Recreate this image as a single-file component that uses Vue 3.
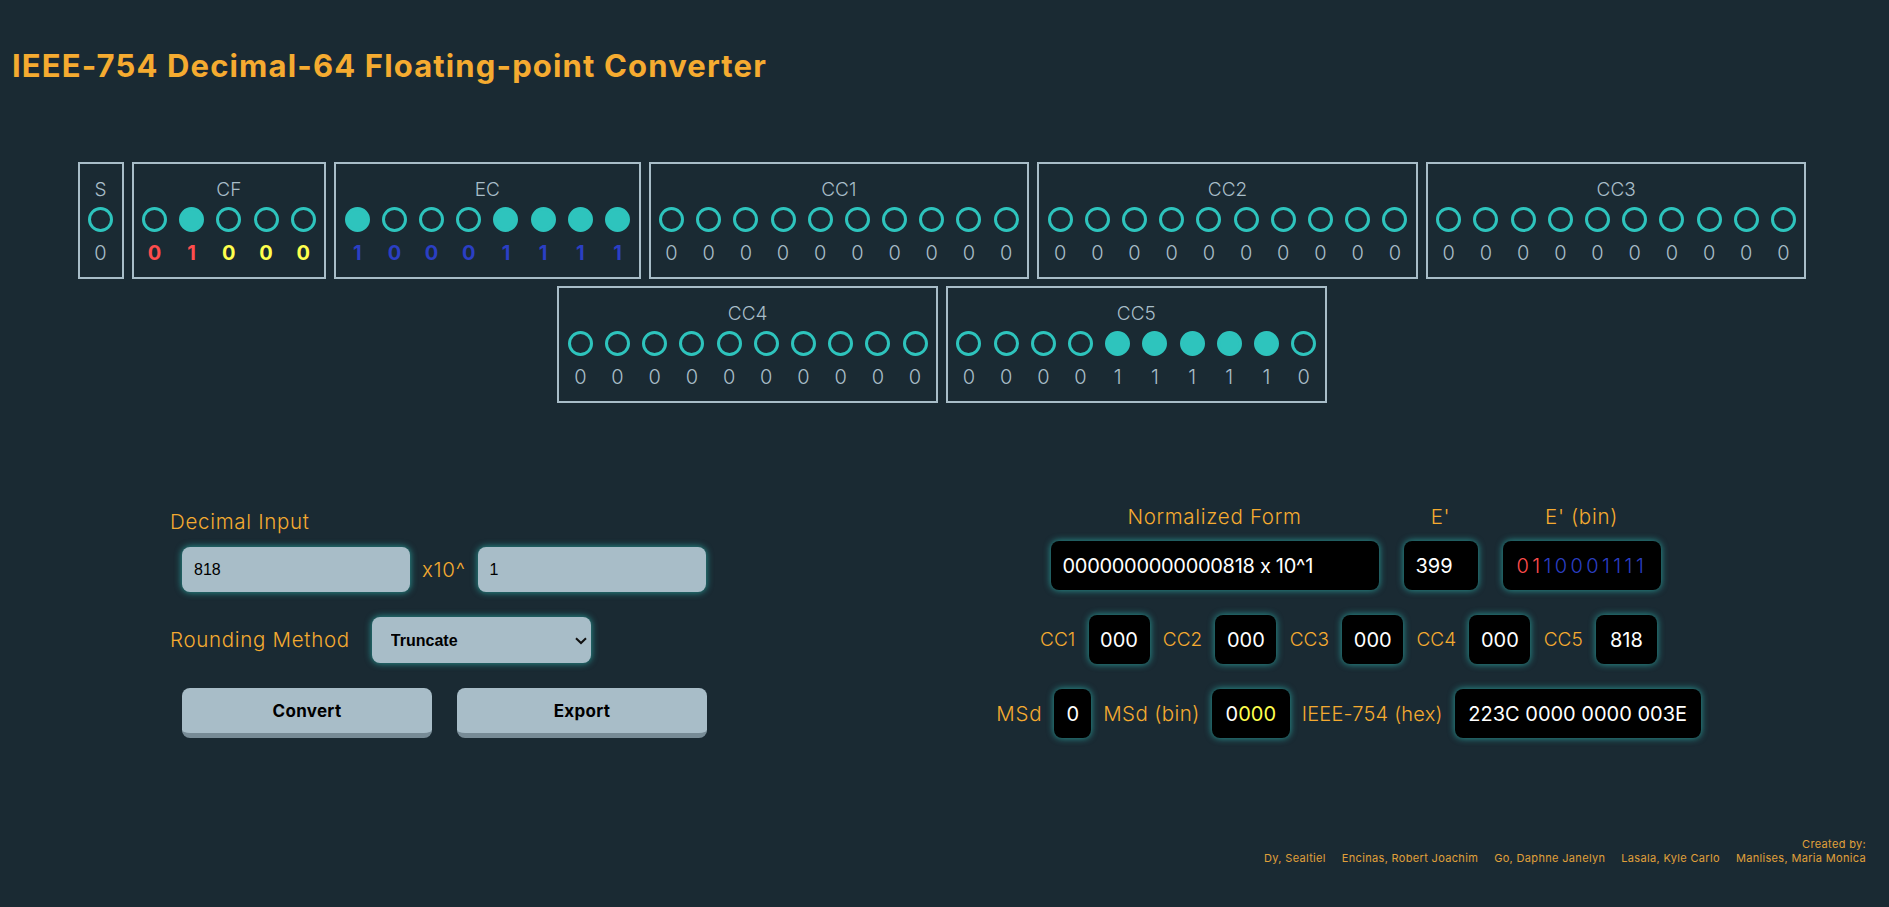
<template>
  <div class="page">
    <h1 class="title">IEEE-754 Decimal-64 Floating-point Converter</h1>

    <div class="bit-groups">
      <div v-for="group in groups" :key="group.name" class="bit-group">
        <div class="group-name">{{ group.name }}</div>
        <div class="bit-row">
          <div v-for="(bit, i) in group.bits" :key="i" class="bit">
            <span class="dot" :class="{ on: bit === '1' }" />
            <span class="digit" :class="group.colors ? group.colors[i] : ''">{{ bit }}</span>
          </div>
        </div>
      </div>
    </div>

    <div class="panels">
      <div class="left-panel">
        <div class="label input-title">Decimal Input</div>
        <div class="input-row">
          <input class="field" type="text" value="818" />
          <span class="label times">x10^</span>
          <input class="field" type="text" value="1" />
        </div>
        <div class="round-row">
          <span class="label">Rounding Method</span>
          <div class="select-wrap">
            <select class="round-select">
              <option>Truncate</option>
              <option>Round up</option>
              <option>Round down</option>
            </select>
            <svg class="chevron" width="12" height="8" viewBox="0 0 12 8">
              <path d="M1 1.2 L6 6 L11 1.2" fill="none" stroke="#111" stroke-width="2" />
            </svg>
          </div>
        </div>
        <div class="button-row">
          <button class="btn">Convert</button>
          <button class="btn">Export</button>
        </div>
      </div>

      <div class="right-panel">
        <div class="out-top">
          <div class="out-col">
            <div class="label">Normalized Form</div>
            <div class="out out-norm">0000000000000818 x 10^1</div>
          </div>
          <div class="out-col">
            <div class="label">E'</div>
            <div class="out out-e">399</div>
          </div>
          <div class="out-col">
            <div class="label">E' (bin)</div>
            <div class="out out-ebin"><span class="red">01</span><span class="blue">10001111</span></div>
          </div>
        </div>

        <div class="out-line cc-line">
          <template v-for="cc in ccValues" :key="cc.name">
            <span class="label cc-label">{{ cc.name }}</span>
            <div class="out out-cc">{{ cc.value }}</div>
          </template>
        </div>

        <div class="out-line">
          <span class="label">MSd</span>
          <div class="out out-msd">0</div>
          <span class="label msd-label">MSd (bin)</span>
          <div class="out out-msdbin">0<span class="yellow">000</span></div>
          <span class="label hex-label">IEEE-754 (hex)</span>
          <div class="out out-hex">223C 0000 0000 003E</div>
        </div>
      </div>
    </div>

    <div class="credits">
      <div>Created by:</div>
      <div class="names">
        <span v-for="name in authors" :key="name">{{ name }}</span>
      </div>
    </div>
  </div>
</template>

<script setup>
const split = (s) => s.split("");

const groups = [
  { name: "S", bits: split("0") },
  {
    name: "CF",
    bits: split("01000"),
    colors: ["cf red", "cf red", "cf yellow", "cf yellow", "cf yellow"],
  },
  { name: "EC", bits: split("10001111"), colors: Array(8).fill("cf blue") },
  { name: "CC1", bits: split("0000000000") },
  { name: "CC2", bits: split("0000000000") },
  { name: "CC3", bits: split("0000000000") },
  { name: "CC4", bits: split("0000000000") },
  { name: "CC5", bits: split("0000111110") },
];

const ccValues = [
  { name: "CC1", value: "000" },
  { name: "CC2", value: "000" },
  { name: "CC3", value: "000" },
  { name: "CC4", value: "000" },
  { name: "CC5", value: "818" },
];

const authors = [
  "Dy, Sealtiel",
  "Encinas, Robert Joachim",
  "Go, Daphne Janelyn",
  "Lasala, Kyle Carlo",
  "Manlises, Maria Monica",
];
</script>

<style>
html,
body {
  margin: 0;
  background: #1a2a33;
}
</style>

<style scoped>
.page {
  height: 907px;
  overflow: hidden;
  box-sizing: border-box;
  background: #1a2a33;
  font-family: Inter, "Noto Sans", sans-serif;
  font-feature-settings: "calt" 0;
  color: #a8bdc8;
}

.title {
  margin: 0;
  padding: 48px 0 0 12px;
  height: 162px;
  box-sizing: border-box;
  font-size: 31px;
  line-height: 36px;
  font-weight: 700;
  letter-spacing: 1.15px;
  color: #f5ab30;
}

.bit-groups {
  display: flex;
  flex-wrap: wrap;
  justify-content: center;
  gap: 7px 8px;
  width: 1884px;
}

.bit-group {
  box-sizing: border-box;
  height: 117px;
  padding: 14px 2.4px 0;
  border: 2px solid #a8bdc8;
}

.group-name {
  height: 25px;
  font-size: 19px;
  line-height: 24px;
  font-weight: 300;
  text-align: center;
}

.bit-row {
  display: flex;
  margin-top: 4px;
}

.bit {
  display: flex;
  flex-direction: column;
  align-items: center;
  width: 37.2px;
}

.dot {
  box-sizing: border-box;
  width: 25px;
  height: 25px;
  border: 3px solid #2ec4bd;
  border-radius: 50%;
}

.dot.on {
  background: #2ec4bd;
}

.digit {
  margin-top: 9px;
  font-size: 20px;
  line-height: 24px;
  font-weight: 300;
}

.digit.cf {
  font-weight: 700;
}

.red {
  color: #ff4d4d;
}

.yellow {
  color: #ffff4d;
}

.blue {
  color: #2b3fc4;
}

.label {
  font-size: 20.5px;
  line-height: 24px;
  font-weight: 300;
  letter-spacing: 0.7px;
  color: #f5ab30;
  white-space: nowrap;
}

.cc-label {
  font-size: 19px;
  letter-spacing: 0;
}

.msd-label {
  letter-spacing: 0.4px;
}

.hex-label {
  font-size: 20px;
  letter-spacing: 0.2px;
}

.panels {
  display: flex;
  padding: 101px 0 0 170px;
}

.left-panel {
  flex: none;
  width: 825px;
  padding-top: 6px;
}

.input-row {
  display: flex;
  align-items: center;
  gap: 12px;
  margin: 13px 0 0 12px;
}

.field {
  box-sizing: border-box;
  width: 228px;
  height: 45px;
  padding: 0 12px;
  border: none;
  border-radius: 8px;
  background: #a8bdc8;
  font-family: "Liberation Sans", sans-serif;
  font-size: 16px;
  color: #000;
  box-shadow: 0 0 6px 1px rgba(46, 196, 189, 0.6);
}

.round-row {
  display: flex;
  align-items: center;
  gap: 22px;
  margin-top: 25px;
}

.select-wrap {
  position: relative;
  display: flex;
}

.round-select {
  box-sizing: border-box;
  width: 219px;
  height: 46px;
  padding: 0 12px 0 19px;
  border: none;
  border-radius: 8px;
  appearance: none;
  background-color: #a8bdc8;
  font-family: "Liberation Sans", sans-serif;
  font-size: 16px;
  font-weight: 700;
  color: #000;
  box-shadow: 0 0 6px 1px rgba(46, 196, 189, 0.6);
}

.chevron {
  position: absolute;
  top: 20px;
  right: 4px;
  pointer-events: none;
}

.button-row {
  display: flex;
  gap: 25px;
  margin: 25px 0 0 12px;
}

.btn {
  box-sizing: border-box;
  width: 250px;
  height: 50px;
  padding: 0;
  border: none;
  border-bottom: 5px solid #778b96;
  border-radius: 8px;
  background: #a8bdc8;
  font-family: Inter, sans-serif;
  font-size: 17px;
  font-weight: 700;
  letter-spacing: 0.3px;
  color: #000;
}

.right-panel {
  flex: none;
  width: 707px;
  padding-top: 1px;
  display: flex;
  flex-direction: column;
  align-items: center;
}

.out-top {
  display: flex;
  gap: 25px;
  padding-left: 14px;
}

.out-col {
  display: flex;
  flex-direction: column;
  align-items: center;
  gap: 12px;
}

.out {
  box-sizing: border-box;
  height: 49px;
  display: flex;
  align-items: center;
  padding: 0 12px;
  border-radius: 8px;
  background: #000;
  font-size: 20px;
  font-weight: 400;
  color: #fff;
  white-space: nowrap;
  box-shadow: 0 0 6px 1px rgba(46, 196, 189, 0.6);
}

.out-norm {
  width: 328px;
  letter-spacing: -0.3px;
}

.out-e {
  width: 74px;
}

.out-ebin {
  width: 158px;
  padding: 0 14px;
  letter-spacing: 3.4px;
  font-weight: 300;
}

.out-line {
  display: flex;
  align-items: center;
  gap: 12px;
  margin-top: 25px;
}

.cc-line {
  gap: 13.3px;
}

.out-cc {
  width: 61px;
  justify-content: center;
  padding: 0;
}

.out-msd {
  width: 37px;
  justify-content: center;
  padding: 0;
}

.out-msdbin {
  width: 78px;
  justify-content: center;
  padding: 0;
}

.out-hex {
  width: 246px;
  justify-content: center;
  padding: 0;
}

.credits {
  position: absolute;
  right: 23px;
  top: 837px;
  font-size: 11px;
  line-height: 14px;
  font-weight: 400;
  letter-spacing: 0.33px;
  color: #e0a03a;
  text-align: right;
}

.names {
  display: flex;
  gap: 16px;
}
</style>
